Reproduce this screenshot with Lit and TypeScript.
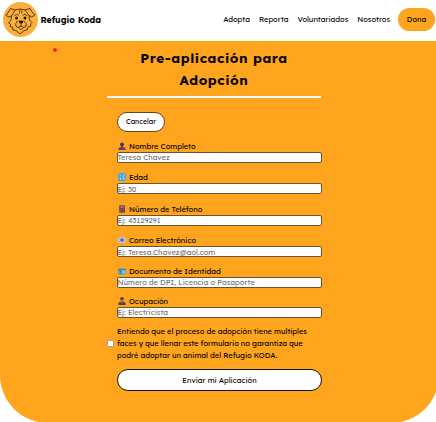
import { LitElement, html, svg, css } from "lit";
import { customElement } from "lit/decorators.js";
import { styleMap } from "lit/directives/style-map.js";

const icons = [
  svg`<circle cx="4" cy="2.600" r="2" fill="#51306b"/><path d="M.5 8V6.600Q.8 5.200 3 5V4h2v1q2.300.2 2.500 1.600V8z" fill="#6a3d72"/>`,
  svg`<rect x=".1" y=".1" width="7.800" height="7.800" rx=".8" fill="#48a5e0"/><path d="M2.200 1.500v2M5 1.500h1v1l-1 1h1M1.800 5h1v1.500h-1M5 4.800v1h1.200v-1v2" fill="none" stroke="#d5efff" stroke-width=".6"/>`,
  svg`<rect x="1.200" y=".3" width="5.800" height="7.500" rx=".5" fill="#694257"/><rect x="2.300" y="1" width="3.600" height="2" fill="#a66b76"/><path d="M2.300 4h3.600M2.300 5.300h3.600M2.300 6.600h3.600" stroke="#a0687a" stroke-width=".6" stroke-dasharray=".8 .5"/>`,
  svg`<rect x=".1" y="1.200" width="7.800" height="5.800" rx=".4" fill="#c5c9df"/><path d="M.2 1.500 4 4.700 7.800 1.500M.2 6.600 3 4M7.800 6.600 5 4" fill="none" stroke="#8c95c8" stroke-width=".5"/><circle cx="4" cy="4" r="1.700" fill="#4d5fc0"/>`,
  svg`<rect x=".1" y="1.800" width="7.800" height="5.600" rx=".6" fill="#46b4dc"/><rect x=".1" y="1.800" width="7.800" height="1.100" fill="#287fa7"/><circle cx="2.300" cy="4.300" r=".9" fill="#76552f"/><path d="M.9 6.700q1.400-2 2.800 0z" fill="#315f75"/><path d="M4.600 4.200h2.500M4.600 5.600h2.500" stroke="#c4e8ed" stroke-width=".6"/>`,
  svg`<circle cx="4" cy="2.300" r="1.700" fill="#9a562e"/><path d="M2 2Q2 .2 4 .2T6 2z" fill="#3c3148"/><path d="M.5 8V6.500Q.8 4.500 4 4.500T7.500 6.500V8z" fill="#4b3c55"/><path d="M2.300 5.200 4 6.600 5.700 5.200" fill="none" stroke="#c8824d" stroke-width=".5"/>`,
];

const fields = [
  { label: "Nombre Completo", hint: "Teresa Chavez", gap: 0 },
  { label: "Edad", hint: "Ej: 30", gap: 8.5 },
  { label: "Número de Teléfono", hint: "Ej: 43129291", gap: 8.5 },
  { label: "Correo Electrónico", hint: "Ej: Teresa.Chavez@aol.com", gap: 8.5 },
  { label: "Documento de Identidad", hint: "Número de DPI, Licencia o Pasaporte", gap: 7.5 },
  { label: "Ocupación", hint: "Ej: Electricista", gap: 7 },
];

@customElement("app-root")
export class AppRoot extends LitElement {
  static styles = css`
    :host { display: block; position: relative; width: 436px; height: 422px; overflow: hidden; background: #fff; color: #080604;
      font-family: Lexend, Inter, "Open Sans", sans-serif; font-feature-settings: "cv11"; font-size: 7.500px; }
    * { box-sizing: border-box; }
    header { height: 41px; display: flex; align-items: center; padding: 0 1px 2px 3px; }
    .logo { width: 35px; height: 35px; flex: none; }
    .brand { margin-left: 2.500px; font-size: 8.800px; font-weight: 700; white-space: nowrap; }
    nav { margin-left: auto; display: flex; align-items: center; gap: 9px; white-space: nowrap; }
    nav span { padding-bottom: 1px; }
    .dona { width: 37px; height: 23px; margin-left: -1px; border-radius: 12px; background: #fea41d; display: grid; place-items: center; }
    main { width: 439px; height: 382px; margin-left: -.5px; padding: 6px 0 0 107.500px; background: #fea41d; border-radius: 0 0 48px 48px; }
    h1 { width: 214px; height: 50px; margin: 0; font-size: 13.500px; line-height: 22px; font-weight: 700; letter-spacing: .55px; text-align: center; }
    hr { width: 214px; height: 1.500px; margin: -1px 0 14px; border: 0; background: #fff; }
    form { width: 205px; margin-left: 10px; }
    button { display: grid; place-items: center; padding: 0; font: inherit; font-feature-settings: inherit; color: #080604; background: #fff; border: 1px solid #66451a; }
    .cancel { width: 48px; height: 20px; border-radius: 10px; font-size: 7px; margin-bottom: 8px; }
    label { height: 12px; display: flex; align-items: center; gap: 3px; padding-left: 1px; line-height: 12px; white-space: nowrap; }
    .icon { width: 8px; height: 8px; }
    input[type="text"] { display: block; width: 205px; height: 11px; padding: 0; border: 1px solid #68522f; border-radius: 2px; background: #fff; font: inherit; font-feature-settings: inherit; text-indent: -.5px; outline: none; }
    input::placeholder { color: #777; opacity: 1; }
    .consent { display: flex; align-items: center; margin: 7px 0 8px -10.500px; gap: 3.500px; line-height: 12px; }
    .consent input { appearance: none; width: 7px; height: 7px; margin: 2px 0 0; flex: none; background: #fff; border: .5px solid #b5a184; border-radius: 1px; }
    .consent p { margin: 0; white-space: nowrap; }
    .send { width: 205px; height: 22px; border-radius: 11px; border-color: #17120b; }
    .dot { position: absolute; left: 53px; top: 48px; width: 4px; height: 4px; border-radius: 50%; background: #ed2424; }
  `;

  render() {
    return html`
      <header>
        <svg class="logo" viewBox="0 0 35 35">
          <circle cx="17.500" cy="17.500" r="17.500" fill="#fbb03b"/>
          <g fill="none" stroke="#30200f" stroke-width=".8" stroke-linejoin="round" stroke-linecap="round">
            <path d="M12 8 7.500 6.500 5.500 10 3 13.500 6 15 8.500 14 12 8Q17 6 22 8L27 6.500 29 10 32 13 29 15 26 13.500 22 8"/>
            <path d="M8.500 14 8 18 5.500 21 7.500 22 7 24.500 9.500 25 10 28 13 28.500 17 32 21 28.500 24 28 25 25 28 24 27.500 22 29 20.500 26.500 18 26 13.500"/>
            <path d="M11.500 13.500q2-2.500 4-.5M20 13q2-2 4 .5M14.500 19q-3 3-1.500 5.500 2 2 5-.5 3 2.500 5 .5 1.500-3-2-5.500M18 21.500V24M15.500 25.500q2.500 4 5 0M17 8l-.5 3M19 9l-.5 2"/>
          </g>
          <g fill="#21180f"><circle cx="13.500" cy="16" r="1.500"/><circle cx="22" cy="16" r="1.500"/><path d="M15.500 19q2.500-1 5 0-.3 2.500-2.500 2.800-2.300-.5-2.500-2.800"/></g>
        </svg>
        <span class="brand">Refugio Koda</span>
        <nav><span>Adopta</span><span>Reporta</span><span>Voluntariados</span><span>Nosotros</span><span class="dona">Dona</span></nav>
      </header>
      <main>
        <h1>Pre-aplicación para<br>Adopción</h1>
        <hr>
        <form>
          <button class="cancel" type="button">Cancelar</button>
          ${fields.map((f, i) => html`
            <div style=${styleMap({ paddingTop: `${f.gap}px` })}>
              <label><svg class="icon" viewBox="0 0 8 8">${icons[i]}</svg>${f.label}</label>
              <input type="text" placeholder=${f.hint}>
            </div>`)}
          <div class="consent"><input type="checkbox"><p>Entiendo que el proceso de adopción tiene multiples<br>faces y que llenar este formulario no garantiza que<br>podré adoptar un animal del Refugio KODA.</p></div>
          <button class="send" type="button">Enviar mi Aplicación</button>
        </form>
      </main>
      <i class="dot"></i>`;
  }
}
